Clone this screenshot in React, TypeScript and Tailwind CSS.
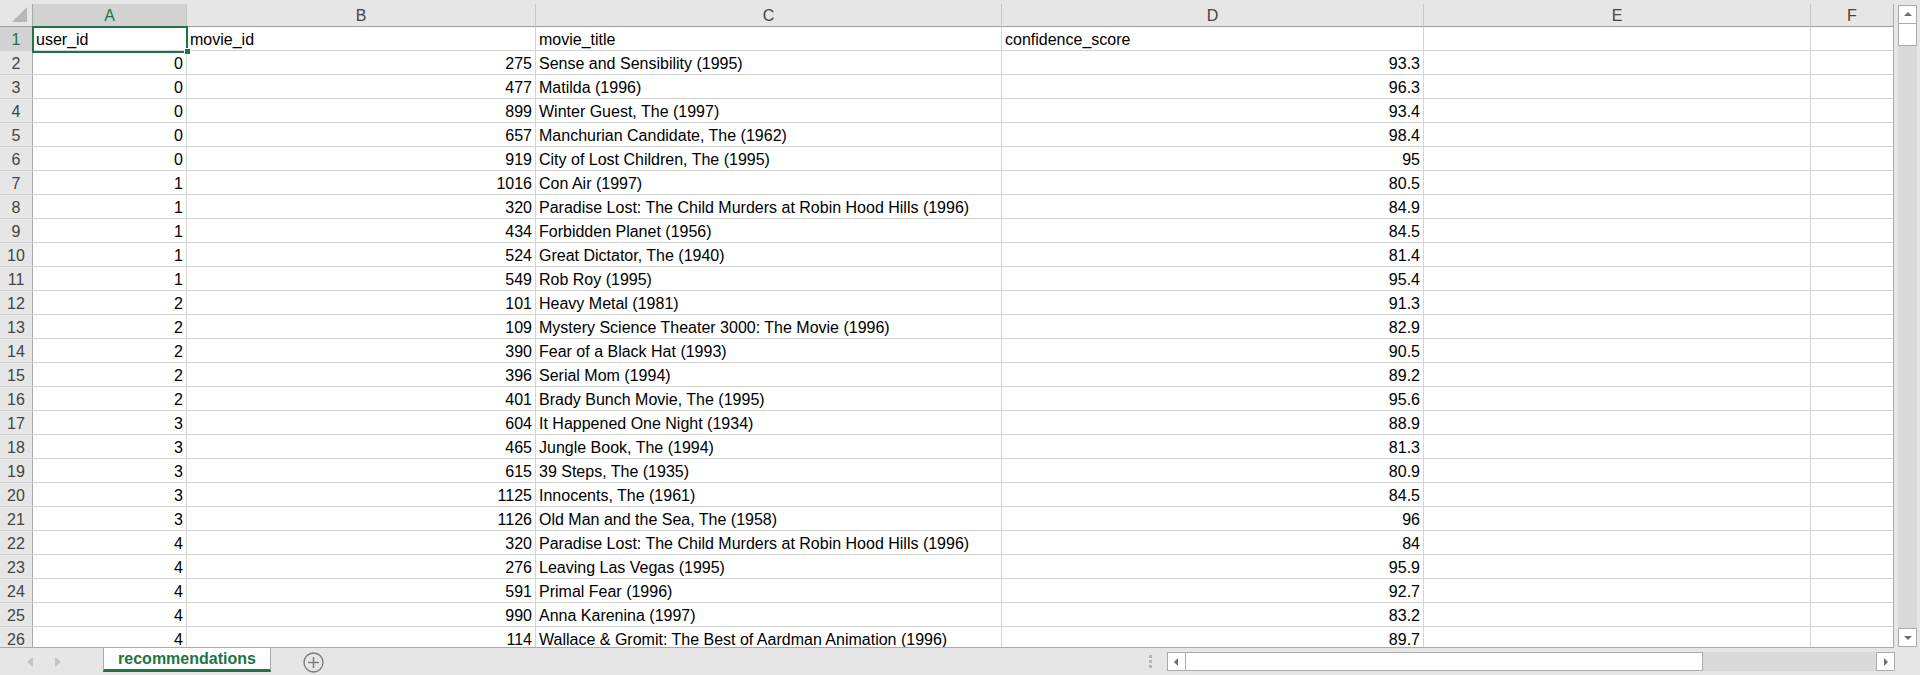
import React from "react";

const data: [string, string, string, string][] = [
  ["0", "275", "Sense and Sensibility (1995)", "93.3"],
  ["0", "477", "Matilda (1996)", "96.3"],
  ["0", "899", "Winter Guest, The (1997)", "93.4"],
  ["0", "657", "Manchurian Candidate, The (1962)", "98.4"],
  ["0", "919", "City of Lost Children, The (1995)", "95"],
  ["1", "1016", "Con Air (1997)", "80.5"],
  ["1", "320", "Paradise Lost: The Child Murders at Robin Hood Hills (1996)", "84.9"],
  ["1", "434", "Forbidden Planet (1956)", "84.5"],
  ["1", "524", "Great Dictator, The (1940)", "81.4"],
  ["1", "549", "Rob Roy (1995)", "95.4"],
  ["2", "101", "Heavy Metal (1981)", "91.3"],
  ["2", "109", "Mystery Science Theater 3000: The Movie (1996)", "82.9"],
  ["2", "390", "Fear of a Black Hat (1993)", "90.5"],
  ["2", "396", "Serial Mom (1994)", "89.2"],
  ["2", "401", "Brady Bunch Movie, The (1995)", "95.6"],
  ["3", "604", "It Happened One Night (1934)", "88.9"],
  ["3", "465", "Jungle Book, The (1994)", "81.3"],
  ["3", "615", "39 Steps, The (1935)", "80.9"],
  ["3", "1125", "Innocents, The (1961)", "84.5"],
  ["3", "1126", "Old Man and the Sea, The (1958)", "96"],
  ["4", "320", "Paradise Lost: The Child Murders at Robin Hood Hills (1996)", "84"],
  ["4", "276", "Leaving Las Vegas (1995)", "95.9"],
  ["4", "591", "Primal Fear (1996)", "92.7"],
  ["4", "990", "Anna Karenina (1997)", "83.2"],
  ["4", "114", "Wallace & Gromit: The Best of Aardman Animation (1996)", "89.7"],
];

const W = [
  "w-[154px]",
  "w-[349px]",
  "w-[466px]",
  "w-[422px]",
  "w-[387px]",
  "w-[83px]",
];
const LETTERS = ["A", "B", "C", "D", "E", "F"];

function Cell({
  i,
  text,
  right,
}: {
  i: number;
  text?: string;
  right?: boolean;
}) {
  const last = i === 5;
  return (
    <div
      className={`${W[i]} shrink-0 h-full border-b border-[#d4d4d4] ${
        last ? "border-r border-r-[#ababab]" : "border-r"
      } px-[3px] pt-[2px] flex items-center overflow-hidden whitespace-nowrap ${
        right ? "justify-end" : "justify-start"
      }`}
    >
      {text}
    </div>
  );
}

function RowHead({ n, sel }: { n: number; sel?: boolean }) {
  return (
    <div
      className={`w-[33px] shrink-0 h-full border-r border-r-[#ababab] border-b border-b-[#d0d0d0] flex items-center justify-center pt-[2px] ${
        sel ? "bg-[#d2d2d2] text-[#217346]" : "bg-[#e6e6e6] text-[#444]"
      }`}
    >
      {n}
    </div>
  );
}

function Tri({ dir }: { dir: "up" | "down" | "left" | "right" }) {
  const pts =
    dir === "up"
      ? "1,6 9,6 5,2"
      : dir === "down"
      ? "1,3 9,3 5,7"
      : dir === "left"
      ? "6,1 6,9 2,5"
      : "3,1 3,9 7,5";
  return (
    <svg width="10" height="10" viewBox="0 0 10 10">
      <polygon points={pts} fill="#6d6d6d" />
    </svg>
  );
}

export default function App() {
  return (
    <div className="w-[1920px] h-[675px] bg-[#e6e6e6] flex flex-col overflow-hidden font-['Liberation_Sans',Arial,sans-serif] text-[16px] text-black">
      {/* top area */}
      <div className="h-[648px] flex shrink-0">
        <div className="w-[1894px] h-[648px] shrink-0 overflow-hidden border-b border-[#ababab] relative flex flex-col">
          {/* column headers */}
          <div className="h-[27px] shrink-0 pt-[4px] flex">
            <div className="w-[33px] shrink-0 h-full border-r border-r-[#ababab] border-b border-b-[#9e9e9e] flex items-end justify-end">
              <svg width="20" height="20" viewBox="0 0 20 20" className="mr-[2px] mb-[2px]">
                <polygon points="2,18 17,18 17,3" fill="#b7b7b7" />
              </svg>
            </div>
            {LETTERS.map((l, i) => (
              <div
                key={l}
                className={`${W[i]} shrink-0 h-full border-b border-b-[#9e9e9e] ${
                  i === 5 ? "border-r border-r-[#ababab]" : "border-r border-r-[#c6c6c6]"
                } flex items-center justify-center pt-[1px] ${
                  i === 0 ? "bg-[#d2d2d2] text-[#217346]" : "text-[#444]"
                }`}
              >
                {l}
              </div>
            ))}
          </div>

          {/* rows */}
          <div className="flex-1 bg-white flex flex-col">
            <div className="h-[24px] shrink-0 flex">
              <RowHead n={1} sel />
              <Cell i={0} text="user_id" />
              <Cell i={1} text="movie_id" />
              <Cell i={2} text="movie_title" />
              <Cell i={3} text="confidence_score" />
              <Cell i={4} />
              <Cell i={5} />
            </div>
            {data.map((r, idx) => (
              <div key={idx} className="h-[24px] shrink-0 flex">
                <RowHead n={idx + 2} />
                <Cell i={0} text={r[0]} right />
                <Cell i={1} text={r[1]} right />
                <Cell i={2} text={r[2]} />
                <Cell i={3} text={r[3]} right />
                <Cell i={4} />
                <Cell i={5} />
              </div>
            ))}
          </div>

          {/* selection */}
          <div className="absolute left-[32px] top-[26px] w-[156px] h-[27px] border-2 border-[#217346] pointer-events-none" />
          <div className="absolute left-[184px] top-[48px] w-[7px] h-[7px] bg-[#217346] border border-white" />
        </div>

        {/* vertical scrollbar */}
        <div className="w-[26px] h-[648px] shrink-0 pl-[4px] pr-[3px] pt-[5px] pb-[1px] flex flex-col">
          <div className="h-[19px] shrink-0 bg-white border border-[#ababab] flex items-center justify-center">
            <Tri dir="up" />
          </div>
          <div className="h-[22px] shrink-0 bg-white border border-[#ababab] border-t-0" />
          <div className="flex-1 bg-[#dadada]" />
          <div className="h-[19px] shrink-0 bg-white border border-[#ababab] flex items-center justify-center">
            <Tri dir="down" />
          </div>
        </div>
      </div>

      {/* bottom tab bar */}
      <div className="h-[27px] shrink-0 flex items-start">
        <div className="w-[103px] h-full shrink-0 flex items-center pl-[25px] gap-[18px]">
          <svg width="10" height="12" viewBox="0 0 10 12">
            <polygon points="8,1 8,11 2,6" fill="#c4c4c4" />
          </svg>
          <svg width="10" height="12" viewBox="0 0 10 12">
            <polygon points="2,1 2,11 8,6" fill="#c4c4c4" />
          </svg>
        </div>
        <div className="w-[168px] h-[25px] -mt-[1px] shrink-0 bg-white border-x border-[#ababab] border-b-[3px] border-b-[#217346] flex items-center justify-center font-bold text-[#217346] text-[16px] pt-[1px]">
          recommendations
        </div>
        <div className="ml-[32px] mt-[4px] shrink-0">
          <svg width="21" height="21" viewBox="0 0 21 21">
            <circle cx="10.5" cy="10.5" r="9.5" fill="none" stroke="#7a7a7a" strokeWidth="1.3" />
            <line x1="10.5" y1="5" x2="10.5" y2="16" stroke="#7a7a7a" strokeWidth="1.4" />
            <line x1="5" y1="10.5" x2="16" y2="10.5" stroke="#7a7a7a" strokeWidth="1.4" />
          </svg>
        </div>
        <div className="ml-auto mr-[25px] h-full flex items-start">
          <div className="flex flex-col gap-[2px] mt-[7px] mr-[15px]">
            <div className="w-[3px] h-[3px] bg-[#b4b4b4]" />
            <div className="w-[3px] h-[3px] bg-[#b4b4b4]" />
            <div className="w-[3px] h-[3px] bg-[#b4b4b4]" />
          </div>
          <div className="w-[728px] h-[19px] mt-[4px] flex">
            <div className="w-[19px] h-full shrink-0 bg-white border border-[#ababab] flex items-center justify-center">
              <Tri dir="left" />
            </div>
            <div className="w-[517px] h-full shrink-0 bg-white border border-[#ababab] border-l-0" />
            <div className="flex-1 h-full bg-[#dadada]" />
            <div className="w-[19px] h-full shrink-0 bg-white border border-[#ababab] flex items-center justify-center">
              <Tri dir="right" />
            </div>
          </div>
        </div>
      </div>
    </div>
  );
}
